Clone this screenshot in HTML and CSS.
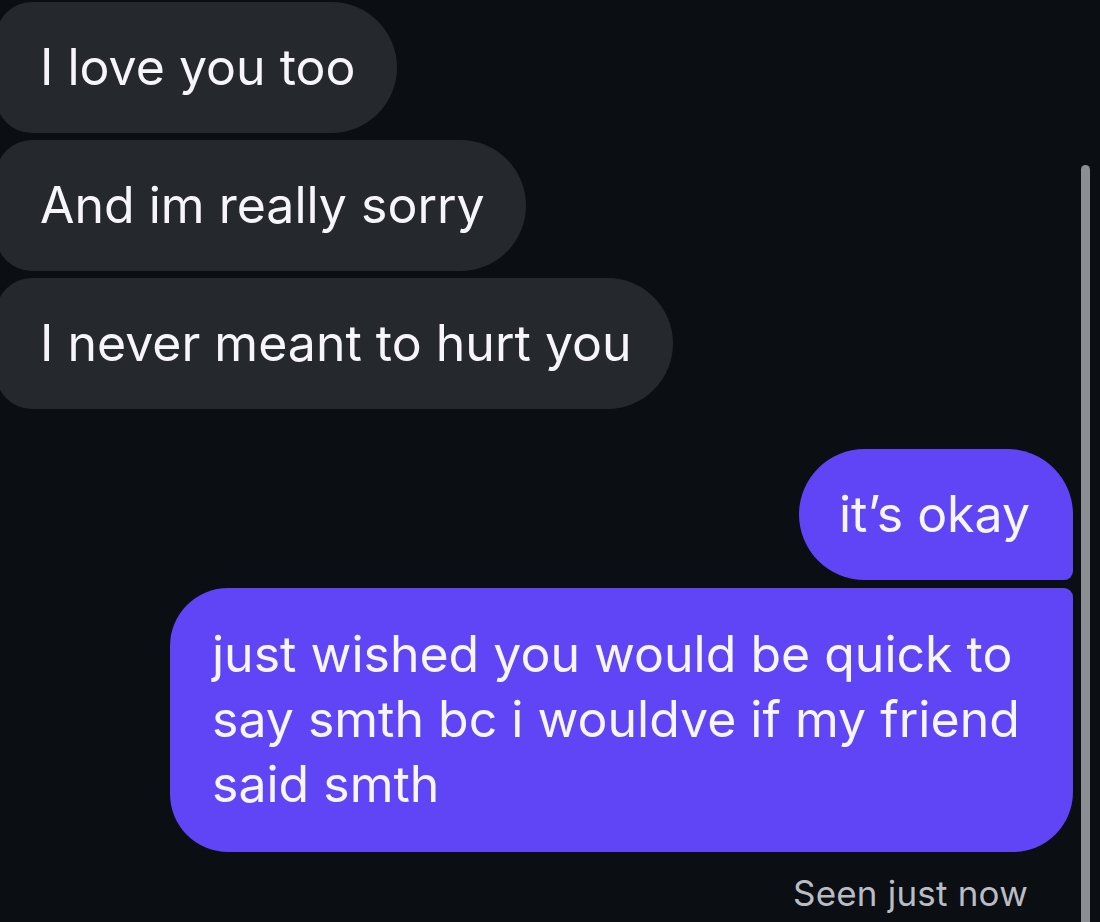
FILE: index.html
```html
<!DOCTYPE html>
<html lang="en">
<head>
<meta charset="utf-8">
<title>Chat</title>
<link rel="stylesheet" href="styles.css">
</head>
<body>
<main class="thread">
  <div class="group received">
    <div class="bubble in">I love you too</div>
    <div class="bubble in">And im really sorry</div>
    <div class="bubble in">I never meant to hurt you</div>
  </div>
  <div class="group sent">
    <div class="bubble out first">it’s okay</div>
    <div class="bubble out last">just wished you would be quick to say smth bc i wouldve if my friend said smth</div>
    <div class="seen">Seen just now</div>
  </div>
</main>
<div class="scrollbar"></div>
</body>
</html>
```
FILE: styles.css
```css
html, body {
  margin: 0;
  padding: 0;
  background: #0b0e13;
  height: 100%;
  overflow: hidden;
}

body {
  font-family: "Inter", "Liberation Sans", sans-serif;
  color: #f6f5fb;
  position: relative;
}

.thread {
  display: flex;
  flex-direction: column;
  padding: 2px 27px 0 0;
}

.group {
  display: flex;
  flex-direction: column;
  gap: 7px;
}

.received {
  align-items: flex-start;
  margin-left: -4px;
}

.sent {
  align-items: flex-end;
  margin-top: 40px;
  gap: 8px;
}

.bubble {
  font-size: 50px;
  line-height: 65px;
  padding: 33px 41px 33px 44px;
}

.in {
  background: #25282d;
  border-radius: 36px 66px 66px 36px;
}

.out {
  background: #5f45f5;
  padding: 33px 43px 33px 40px;
}

.out.first {
  border-radius: 66px 66px 9px 66px;
}

.out.last {
  max-width: 820px;
  border-radius: 58px 9px 60px 58px;
  padding: 34px 41px 35px 42px;
}

.seen {
  font-size: 35px;
  letter-spacing: 0.2px;
  color: #b9bdc3;
  margin: 12px 45px 0 0;
}

.scrollbar {
  position: absolute;
  left: 1081px;
  top: 165px;
  width: 9px;
  height: 800px;
  border-radius: 5px 5px 0 0;
  background: #8b8e93;
}
```
